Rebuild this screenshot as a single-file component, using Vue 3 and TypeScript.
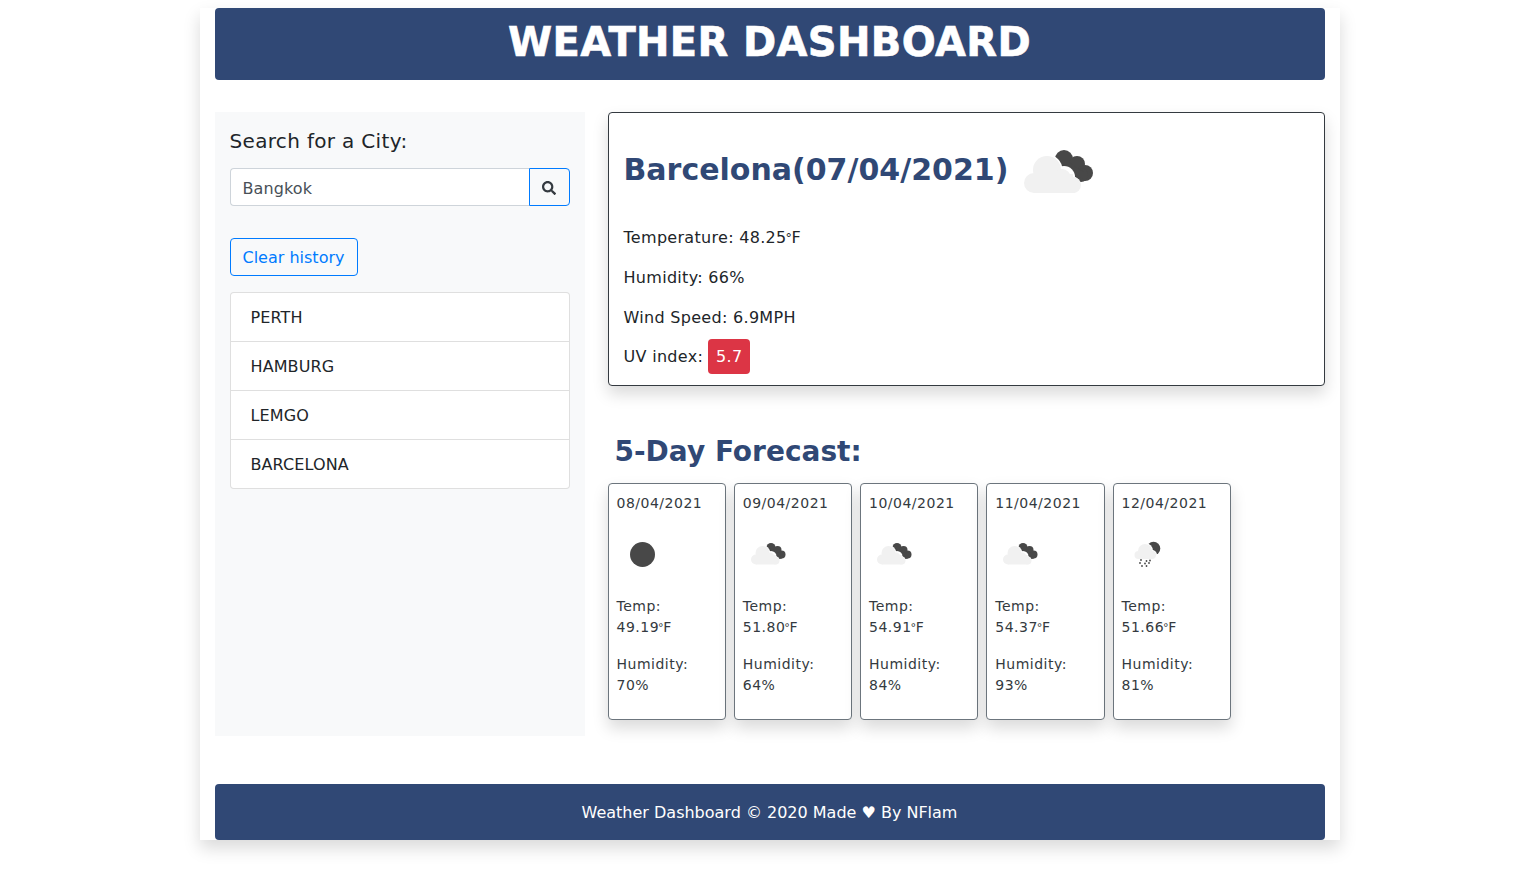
<template>
  <div class="page">
    <div class="container">
      <header class="top-bar">
        <h1>WEATHER DASHBOARD</h1>
      </header>

      <main class="row">
        <aside class="side">
          <label class="search-label">Search for a City:</label>
          <div class="input-group">
            <input class="city-input" type="text" value="Bangkok" />
            <button class="search-btn" aria-label="Search">
              <svg width="14" height="14" viewBox="0 0 512 512">
                <path fill="#343a40" d="M505 442.700L405.300 343c-4.500-4.500-10.600-7-17-7H372c27.600-35.300 44-79.700 44-128C416 93.100 322.900 0 208 0S0 93.100 0 208s93.100 208 208 208c48.300 0 92.700-16.400 128-44v16.300c0 6.400 2.500 12.500 7 17l99.700 99.700c9.400 9.400 24.600 9.400 33.900 0l28.300-28.300c9.400-9.400 9.400-24.600.1-34zM208 336c-70.700 0-128-57.200-128-128 0-70.700 57.200-128 128-128 70.700 0 128 57.200 128 128 0 70.700-57.200 128-128 128z" />
              </svg>
            </button>
          </div>
          <button class="clear-btn">Clear history</button>
          <ul class="history">
            <li v-for="city in cities" :key="city">{{ city }}</li>
          </ul>
        </aside>

        <section class="content">
          <div class="today">
            <h2 class="today-title">
              <span>Barcelona(07/04/2021)</span>
              <svg class="today-icon" width="70" height="50" viewBox="0 0 70 50">
                <use href="#broken-clouds" />
              </svg>
            </h2>
            <p>Temperature: 48.25<span class="deg">°</span>F</p>
            <p>Humidity: 66%</p>
            <p>Wind Speed: 6.9MPH</p>
            <p class="uv"><span>UV index:</span><span class="badge">5.7</span></p>
          </div>

          <h3 class="forecast-title">5-Day Forecast:</h3>
          <div class="forecast">
            <div v-for="day in days" :key="day.date" class="day">
              <div class="date">{{ day.date }}</div>
              <div class="day-icon">
                <svg width="50" height="50" viewBox="0 0 50 50">
                  <circle v-if="day.icon === 'clear'" cx="25.500" cy="24.500" r="12.500" fill="#484848" />
                  <g v-else-if="day.icon === 'clouds'" transform="translate(8 10) scale(0.5)">
                    <use href="#broken-clouds" />
                  </g>
                  <g v-else>
                    <circle cx="31.500" cy="18.500" r="6.800" fill="#484848" />
                    <g fill="#fff">
                      <circle cx="23" cy="21" r="8" />
                      <circle cx="30" cy="25" r="5" />
                    </g>
                    <g fill="#f1f1f1">
                      <circle cx="23" cy="21" r="7" />
                      <circle cx="16.500" cy="25" r="4" />
                      <circle cx="30" cy="25" r="4" />
                      <rect x="16.500" y="23" width="13.500" height="6" />
                    </g>
                    <g fill="#484848">
                      <circle cx="19" cy="30" r="0.900" />
                      <circle cx="24.500" cy="31" r="0.900" />
                      <circle cx="28" cy="30.500" r="0.900" />
                      <circle cx="18" cy="33" r="0.900" />
                      <circle cx="23" cy="33.500" r="0.900" />
                      <circle cx="27" cy="33" r="0.900" />
                      <circle cx="20" cy="36" r="0.900" />
                      <circle cx="24.500" cy="36" r="0.900" />
                    </g>
                  </g>
                </svg>
              </div>
              <p>Temp:<br />{{ day.temp }}<span class="deg">°</span>F</p>
              <p>Humidity:<br />{{ day.humidity }}%</p>
            </div>
          </div>
        </section>
      </main>

      <footer class="bottom-bar">Weather Dashboard © 2020 Made ♥ By NFlam</footer>
    </div>

    <svg class="defs" width="0" height="0">
      <defs>
        <g id="broken-clouds">
          <g fill="#484848">
            <circle cx="40" cy="15" r="9" />
            <circle cx="53" cy="20" r="8" />
            <circle cx="61" cy="29" r="8" />
            <circle cx="57" cy="31" r="7" />
            <path d="M36 18h9l8 6 7 4v8l-10-6z" />
          </g>
          <g fill="#fff">
            <circle cx="23" cy="26" r="15.500" />
            <circle cx="40" cy="33" r="11" />
            <circle cx="47" cy="42" r="10" />
          </g>
          <g fill="#f1f1f1">
            <circle cx="23" cy="26" r="14" />
            <circle cx="10" cy="39" r="10" />
            <circle cx="38" cy="34" r="9" />
            <circle cx="49" cy="41" r="8" />
            <rect x="10" y="30" width="39" height="19" />
            <rect x="49" y="41" width="2" height="8" />
          </g>
        </g>
      </defs>
    </svg>
  </div>
</template>

<script setup lang="ts">
interface Day {
  date: string
  icon: 'clear' | 'clouds' | 'rain'
  temp: string
  humidity: number
}

const cities: string[] = ['PERTH', 'HAMBURG', 'LEMGO', 'BARCELONA']

const days: Day[] = [
  { date: '08/04/2021', icon: 'clear', temp: '49.19', humidity: 70 },
  { date: '09/04/2021', icon: 'clouds', temp: '51.80', humidity: 64 },
  { date: '10/04/2021', icon: 'clouds', temp: '54.91', humidity: 84 },
  { date: '11/04/2021', icon: 'clouds', temp: '54.37', humidity: 93 },
  { date: '12/04/2021', icon: 'rain', temp: '51.66', humidity: 81 },
]
</script>

<style>
body {
  margin: 0;
  background: #fff;
}
</style>

<style scoped>
.page {
  font-family: "DejaVu Sans", Verdana, sans-serif;
  font-size: 16px;
  line-height: 1.5;
  color: #212529;
  height: 889px;
  overflow: hidden;
  padding-top: 8px;
  box-sizing: border-box;
}
.container {
  width: 1140px;
  height: 832px;
  margin: 0 auto;
  padding: 0 15px;
  box-sizing: border-box;
  background: #fff;
  box-shadow: 0 8px 16px rgba(0, 0, 0, 0.15);
}
.top-bar {
  height: 72px;
  background: #304875;
  border-radius: 4px;
  text-align: center;
  color: #fff;
}
.top-bar h1 {
  margin: 0;
  font-size: 40px;
  font-weight: 700;
  line-height: 68px;
  letter-spacing: 0.35px;
  -webkit-text-stroke: 0.6px #fff;
}
.row {
  display: flex;
  gap: 23px;
  margin-top: 32px;
  height: 624px;
}
.side {
  width: 370px;
  background: #f8f9fa;
  padding: 15px;
  box-sizing: border-box;
}
.search-label {
  display: block;
  font-size: 20px;
  line-height: 28px;
  letter-spacing: 0.33px;
  margin-bottom: 13px;
}
.input-group {
  display: flex;
  height: 38px;
  margin-bottom: 32px;
}
.city-input {
  flex: 1;
  min-width: 0;
  border: 1px solid #ced4da;
  border-right: 0;
  border-radius: 4px 0 0 4px;
  padding: 8px 12px 4px;
  font: inherit;
  letter-spacing: 0.1px;
  color: #495057;
  background: #fff;
}
.search-btn {
  width: 41px;
  border: 1px solid #007bff;
  border-radius: 0 4px 4px 0;
  background: transparent;
  padding: 1px 0 0;
  display: flex;
  align-items: center;
  justify-content: center;
}
.clear-btn {
  display: block;
  height: 38px;
  padding: 2px 13px 0 12px;
  border: 1px solid #007bff;
  border-radius: 4px;
  background: transparent;
  color: #007bff;
  font: inherit;
  margin-bottom: 16px;
}
.history {
  list-style: none;
  margin: 0;
  padding: 0;
  background: #fff;
  border: 1px solid rgba(0, 0, 0, 0.125);
  border-radius: 4px;
}
.history li {
  height: 48px;
  padding: 0 20px;
  line-height: 50px;
  letter-spacing: 0.1px;
  box-sizing: content-box;
  border-bottom: 1px solid rgba(0, 0, 0, 0.125);
}
.history li:last-child {
  border-bottom: 0;
}
.content {
  flex: 1;
  min-width: 0;
}
.today {
  height: 274px;
  box-sizing: border-box;
  border: 1px solid #343a40;
  border-radius: 4px;
  padding: 15px;
  background: #fff;
  box-shadow: 0 8px 16px rgba(0, 0, 0, 0.15);
}
.today p {
  margin: 0 0 16px;
  line-height: 24px;
  letter-spacing: 0.3px;
}
.today .uv {
  display: flex;
  align-items: center;
  gap: 5px;
  height: 35px;
  margin: -7px 0 0;
}
.deg {
  font-size: 0.8em;
  line-height: 0;
  margin-left: -1px;
  letter-spacing: -0.5px;
  vertical-align: 0.1em;
}
.today-title {
  display: flex;
  align-items: center;
  gap: 16px;
  margin: 0 0 16px;
  height: 82px;
  color: #304875;
  font-size: 30px;
  font-weight: 700;
}
.badge {
  background: #dc3545;
  color: #fff;
  border-radius: 4px;
  height: 35px;
  line-height: 36px;
  padding: 0 8px;
}
.forecast-title {
  margin: 49px 0 14px 7px;
  color: #304875;
  font-size: 28px;
  font-weight: 700;
  line-height: 34px;
}
.forecast {
  display: flex;
  gap: 8px;
}
.day {
  width: 118.250px;
  height: 237px;
  box-sizing: border-box;
  border: 1px solid #6c757d;
  border-radius: 4px;
  padding: 9px 8px 8px;
  font-size: 14px;
  line-height: 21px;
  letter-spacing: 0.5px;
  color: #343a40;
  background: #fff;
  box-shadow: 0 8px 16px rgba(0, 0, 0, 0.15);
}
.day p {
  margin: 0 0 16px;
}
.date {
  margin-bottom: 16px;
}
.day-icon {
  height: 50px;
  margin-bottom: 16px;
}
.day-icon svg {
  display: block;
}
.bottom-bar {
  margin-top: 48px;
  height: 56px;
  line-height: 58px;
  background: #304875;
  color: #fff;
  text-align: center;
  border-radius: 4px;
}
.defs {
  position: absolute;
}
</style>
